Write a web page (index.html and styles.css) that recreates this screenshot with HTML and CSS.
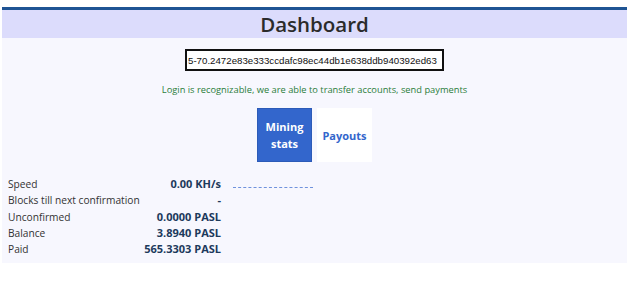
FILE: index.html
```html
<!DOCTYPE html>
<html lang="en">
<head>
    <meta charset="UTF-8">
    <meta name="viewport" content="width=device-width, initial-scale=1.0">
    <title>Dashboard</title>
    <link rel="stylesheet" href="styles.css">
</head>
<body>
    <div class="page">
        <div class="header">
            <h1>Dashboard</h1>
        </div>

        <input class="login" type="text" value="5-70.2472e83e333ccdafc98ec44db1e638ddb940392ed63">

        <p class="login-note">Login is recognizable, we are able to transfer accounts, send payments</p>

        <div class="tabs">
            <button class="tab active">Mining<br>stats</button>
            <button class="tab">Payouts</button>
        </div>

        <div class="stats">
            <table class="stats-table">
                <tr><td>Speed</td><td class="val">0.00 KH/s</td></tr>
                <tr><td>Blocks till next confirmation</td><td class="val">-</td></tr>
                <tr><td>Unconfirmed</td><td class="val">0.0000 PASL</td></tr>
                <tr><td>Balance</td><td class="val">3.8940 PASL</td></tr>
                <tr><td>Paid</td><td class="val">565.3303 PASL</td></tr>
            </table>
            <div class="chart">
                <div class="chart-line"></div>
            </div>
        </div>
    </div>
</body>
</html>
```

FILE: styles.css
```css
body {
    margin: 0;
    background: #fff;
    font-family: "Open Sans", "Noto Sans", sans-serif;
    color: #333;
}
.page {
    margin: 7px 13px 0 2px;
    border-top: 3px solid #1f5494;
    background: #f7f7fe;
    padding-bottom: 6px;
    overflow: hidden;
}
.header {
    background: #dcdcfc;
    height: 28px;
    text-align: center;
}
h1 {
    margin: 0;
    font-size: 20.5px;
    font-weight: 600;
    line-height: 28px;
    color: #2b2b2b;
}
.login {
    display: block;
    box-sizing: border-box;
    width: 259px;
    height: 22px;
    margin: 11px auto 0;
    border: 2px solid #111;
    padding: 0 1px;
    font-family: "Liberation Sans", Arial, sans-serif;
    font-size: 9.7px;
    color: #111;
    background: #fff;
}
.login-note {
    margin: 12px 0 0;
    text-align: center;
    font-size: 9.3px;
    line-height: 14px;
    color: #2a7d3a;
}
.tabs {
    display: flex;
    justify-content: center;
    gap: 5px;
    margin-top: 11px;
}
.tab {
    box-sizing: border-box;
    width: 55px;
    height: 54px;
    border: none;
    padding: 0;
    background: #fff;
    color: #3366cc;
    font-family: "Open Sans", "Noto Sans", sans-serif;
    font-size: 11px;
    font-weight: 700;
    line-height: 17px;
    cursor: pointer;
}
.tab.active {
    background: #3366cc;
    color: #fff;
    border: 1px solid #2c5bb8;
}
.stats {
    display: flex;
    align-items: flex-start;
    margin-top: 14px;
    padding-left: 5px;
}
.stats-table {
    border-collapse: collapse;
    font-size: 10.2px;
    width: 215px;
    white-space: nowrap;
}
.stats-table td {
    padding: 0 1px;
    line-height: 16.3px;
    color: #333;
}
.stats-table .val {
    text-align: right;
    font-size: 11px;
    font-weight: 700;
    color: #1d3a5c;
}
.chart {
    margin-left: 11px;
    width: 80px;
    padding-top: 11px;
}
.chart-line {
    border-top: 1px dashed #6f92dd;
}
```
